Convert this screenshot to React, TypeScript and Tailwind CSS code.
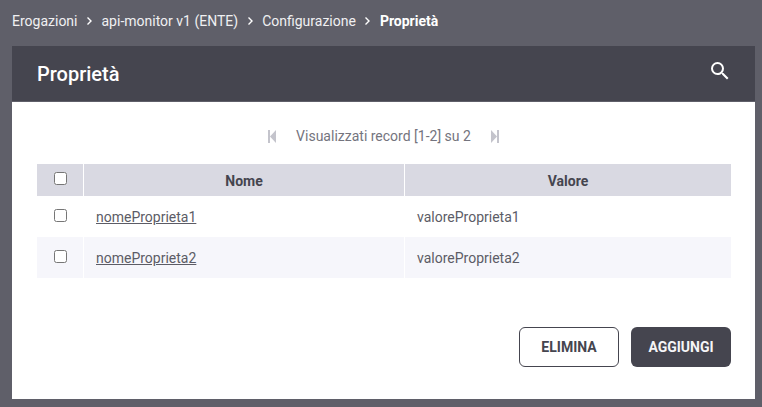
function Crumb({ label }: { label: string }) {
  return (
    <>
      <span>{label}</span>
      <svg width="7" height="10" viewBox="0 0 7 10" fill="none" className="ml-[8.5px] mr-[8.5px] mt-[1px]">
        <path d="M1.5 1.5L5 5L1.5 8.5" stroke="#ffffff" strokeWidth="1.4" />
      </svg>
    </>
  )
}

function PagerIcon({ flip }: { flip?: boolean }) {
  return (
    <svg width="8" height="13" viewBox="0 0 8 13" className={flip ? "rotate-180" : ""}>
      <rect x="0" y="0" width="2" height="13" fill="#c4c4cc" />
      <path d="M8 0V13L2 6.5Z" fill="#c4c4cc" />
    </svg>
  )
}

function Row({ name, value, shaded }: { name: string; value: string; shaded?: boolean }) {
  const bg = shaded ? "bg-[#f6f6fb]" : "bg-white"
  return (
    <div className="grid h-[41px] grid-cols-[46px_320px_326px] gap-x-px text-sm text-[#5c5c66]">
      <div className={`flex items-center justify-center pb-[3px] ${bg}`}>
        <input type="checkbox" className="h-[13px] w-[13px]" />
      </div>
      <div className={`flex items-center px-3 pt-px ${bg}`}>
        <a href="#" className="underline">
          {name}
        </a>
      </div>
      <div className={`flex items-center px-3 pt-px ${bg}`}>{value}</div>
    </div>
  )
}

export default function App() {
  return (
    <div className="h-[407px] w-[762px] overflow-hidden bg-[#5f5f69] font-['Roboto',sans-serif]">
      <div className="flex h-[46px] items-center pb-[5px] pl-3 text-sm text-[#f0f0f2]">
        <Crumb label="Erogazioni" />
        <Crumb label="api-monitor v1 (ENTE)" />
        <Crumb label="Configurazione" />
        <span className="font-bold text-white">Proprietà</span>
      </div>

      <div className="ml-3 h-[353px] w-[743px] bg-white">
        <div className="flex h-14 items-center justify-between border-b border-[#5f5f69] bg-[#45454f] pl-[25px] pr-[23px]">
          <h1 className="text-xl font-medium text-white">Proprietà</h1>
          <svg width="24" height="24" viewBox="0 0 24 24" fill="#ffffff" className="mb-[6px]">
            <path d="M15.5 14h-.79l-.28-.27A6.471 6.471 0 0 0 16 9.5 6.5 6.5 0 1 0 9.5 16c1.61 0 3.09-.59 4.23-1.57l.27.28v.79l5 4.99L20.49 19l-4.99-5zm-6 0C7.01 14 5 11.99 5 9.5S7.01 5 9.5 5 14 7.01 14 9.5 11.99 14 9.5 14z" />
          </svg>
        </div>

        <div className="pl-[25px] pr-6">
          <div className="flex h-[62px] items-center justify-center gap-5 pr-px pt-[6px] text-sm text-[#74747e]">
            <PagerIcon />
            <span>Visualizzati record [1-2] su 2</span>
            <PagerIcon flip />
          </div>

          <div className="grid h-8 grid-cols-[46px_320px_326px] gap-x-px text-sm font-bold text-[#45454f]">
            <div className="flex items-center justify-center bg-[#d9d9e2] pb-[3px]">
              <input type="checkbox" className="h-[13px] w-[13px]" />
            </div>
            <div className="flex items-center justify-center bg-[#d9d9e2] pt-px">Nome</div>
            <div className="flex items-center justify-center bg-[#d9d9e2] pt-px">Valore</div>
          </div>
          <Row name="nomeProprieta1" value="valoreProprieta1" />
          <Row name="nomeProprieta2" value="valoreProprieta2" shaded />

          <div className="mt-[49px] flex justify-end gap-3">
            <button className="h-10 w-[100px] rounded-md border border-[#45454f] bg-white text-sm font-bold text-[#45454f]">
              ELIMINA
            </button>
            <button className="h-10 w-[100px] rounded-md bg-[#45454f] text-sm font-bold text-[#f5f5f7]">
              AGGIUNGI
            </button>
          </div>
        </div>
      </div>
    </div>
  )
}
